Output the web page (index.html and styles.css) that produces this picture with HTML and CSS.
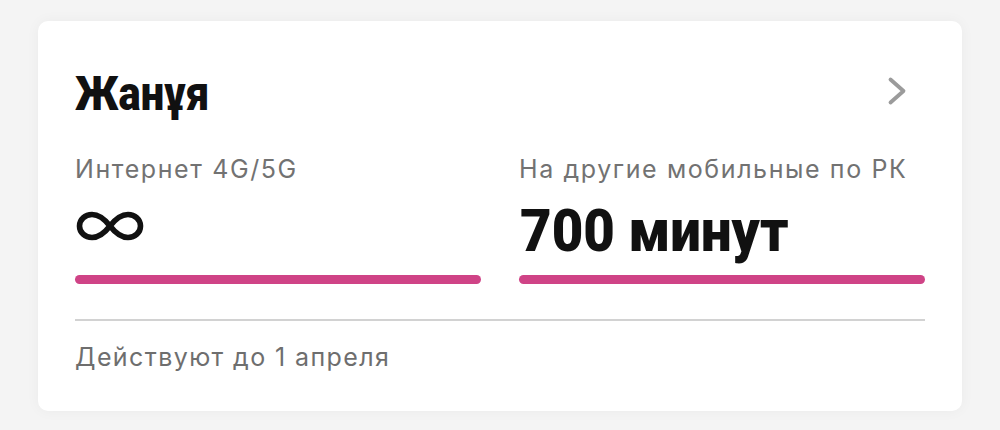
FILE: index.html
```html
<!DOCTYPE html>
<html lang="ru">
<head>
<meta charset="utf-8">
<link rel="stylesheet" href="styles.css">
</head>
<body>
<div class="page">
  <div class="card">
    <div class="head">
      <h1 class="title"><span class="cond">Жанұя</span></h1>
      <svg class="chev" width="20" height="30" viewBox="0 0 20 30"><path d="M3.5 3.5 L16.5 15 L3.5 26.5" fill="none" stroke="#9b9b9b" stroke-width="3.8" stroke-linecap="round" stroke-linejoin="round"/></svg>
    </div>
    <div class="cols">
      <div class="col">
        <div class="label">Интернет 4G/5G</div>
        <div class="value">
          <svg class="inf" width="68" height="30" viewBox="0 0 68 30" aria-label="∞"><path d="M34 15 C27 6 21 3.5 16 3.5 C9 3.5 3.5 8.5 3.5 15 C3.5 21.5 9 26.5 16 26.5 C21 26.5 27 24 34 15 C41 6 47 3.5 52 3.5 C59 3.5 64.5 8.5 64.5 15 C64.5 21.5 59 26.5 52 26.5 C47 26.5 41 24 34 15 Z" fill="none" stroke="#111" stroke-width="5.6" stroke-linejoin="round"/></svg>
        </div>
        <div class="bar"></div>
      </div>
      <div class="col">
        <div class="label">На другие мобильные по РК</div>
        <div class="value"><span class="cond">700 минут</span></div>
        <div class="bar"></div>
      </div>
    </div>
    <div class="divider"></div>
    <div class="foot">Действуют до 1 апреля</div>
  </div>
</div>
</body>
</html>
```
FILE: styles.css
```css
html, body { margin: 0; padding: 0; }
body { background: #f4f4f4; width: 1000px; height: 430px; overflow: hidden; }
.page { padding: 21px 38px 0 38px; }
.card {
  background: #fff;
  border-radius: 10px;
  box-shadow: 0 0 14px rgba(0,0,0,0.045);
  height: 390px;
  box-sizing: border-box;
  padding: 49px 37px 0 37px;
  display: flex;
  flex-direction: column;
}
.head { display: flex; justify-content: space-between; align-items: flex-start; }
.title {
  margin: 0;
  font-family: "Roboto", sans-serif;
  font-weight: 900;
  font-size: 48px;
  line-height: 48px;
  color: #111;
  white-space: nowrap;
}
.cond { display: inline-block; transform: scaleX(0.87); transform-origin: 0 50%; }
.chev { margin-right: 18px; margin-top: 6px; }
.cols { display: grid; grid-template-columns: 1fr 1fr; column-gap: 38px; margin-top: 39px; }
.label {
  font-family: "Inter", "Roboto", sans-serif;
  font-size: 25px;
  line-height: 25px;
  letter-spacing: 1.6px;
  color: #727272;
  white-space: nowrap;
}
.value {
  margin-top: 19px;
  height: 59px;
  display: flex;
  align-items: center;
  font-family: "Roboto", sans-serif;
  font-weight: 900;
  font-size: 59px;
  line-height: 59px;
  color: #111;
  white-space: nowrap;
}
.value .cond { transform: scaleX(0.925); margin-left: 1px; }
.inf { margin-left: 1px; margin-bottom: 9px; }
.bar { height: 9px; border-radius: 5px; background: #cf4386; margin-top: 15px; }
.divider { height: 2px; background: #d2d2d2; margin-top: 35px; }
.foot {
  font-family: "Inter", "Roboto", sans-serif;
  font-size: 25px;
  line-height: 25px;
  letter-spacing: 1.4px;
  color: #6e6e6e;
  margin-top: 24px;
  white-space: nowrap;
}
```
